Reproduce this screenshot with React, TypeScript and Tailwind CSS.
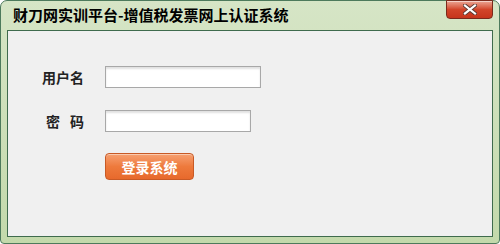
export default function App() {
  return (
    <div className="w-[500px] h-[244px] bg-white">
      <div
        className="flex h-full w-full flex-col rounded-t-[7px] rounded-b-[4px] border border-[#4d7a5c] bg-gradient-to-b from-[#d6e5c6] to-[#c3d9ab] px-[6px] pb-[6px]"
        style={{ fontFamily: '"Noto Sans CJK SC", sans-serif' }}
      >
        <div className="flex h-[29px] shrink-0 items-start justify-between">
          <h1 className="mt-[5px] pl-[6px] text-[15px] font-bold leading-[18px] text-black">
            财刀网实训平台-增值税发票网上认证系统
          </h1>
          <button className="-mt-px flex h-[19px] w-[47px] items-center justify-center rounded-b-[4px] border border-[#7a2a1c] bg-gradient-to-b from-[#eaa594] via-[#d2452a] to-[#c6351c] shadow-[inset_0_1px_0_rgba(255,255,255,0.5)]">
            <svg width="14" height="11" viewBox="0 0 14 11">
              <path d="M2 1.5 L12 9.5 M12 1.5 L2 9.5" stroke="#5a3a34" strokeWidth="4" strokeLinecap="square" />
              <path d="M2 1.5 L12 9.5 M12 1.5 L2 9.5" stroke="#ffffff" strokeWidth="2.2" strokeLinecap="square" />
            </svg>
          </button>
        </div>
        <div className="flex flex-1 flex-col border border-[#3f6b4d] bg-[#f0f0f0]">
          <div className="mt-[35px] flex items-center">
            <span className="ml-[34px] w-[63px] text-[14px] font-bold leading-none text-[#222]">用户名</span>
            <div className="h-[22px] w-[156px] border border-[#a8a8a8] bg-white shadow-[inset_0_2px_2px_rgba(0,0,0,0.12)]" />
          </div>
          <div className="mt-[22px] flex items-center">
            <span className="ml-[38px] flex w-[59px] gap-[10px] text-[14px] font-bold leading-none text-[#222]">
              <span>密</span>
              <span>码</span>
            </span>
            <div className="h-[22px] w-[146px] border border-[#a8a8a8] bg-white shadow-[inset_0_2px_2px_rgba(0,0,0,0.12)]" />
          </div>
          <div className="mt-[21px] pl-[97px]">
            <button className="flex h-[27px] w-[89px] items-center justify-center rounded-[4px] border border-[#c85a26] bg-gradient-to-b from-[#f6a070] via-[#ee7a3c] to-[#e7692c] text-[14px] font-bold leading-none text-white shadow-[inset_0_1px_0_rgba(255,255,255,0.45)]">
              登录系统
            </button>
          </div>
        </div>
      </div>
    </div>
  );
}
